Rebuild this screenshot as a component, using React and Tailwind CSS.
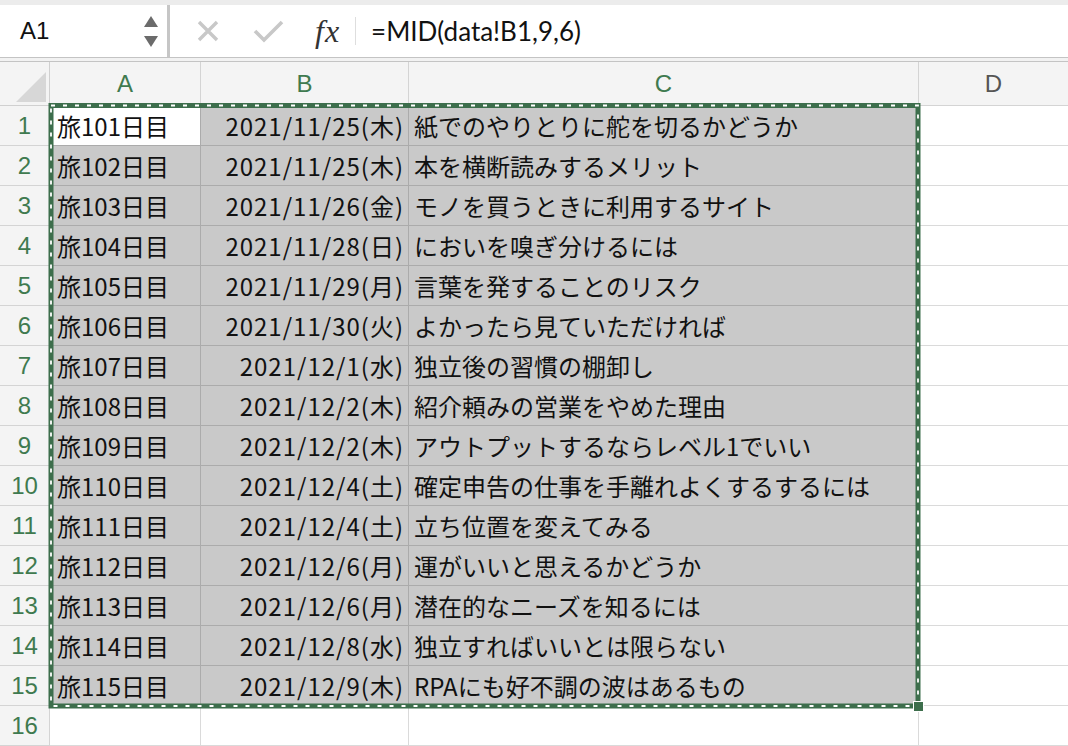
import React from 'react';

const rows = [
    ['旅101日目', '2021/11/25(木)', '紙でのやりとりに舵を切るかどうか'],
    ['旅102日目', '2021/11/25(木)', '本を横断読みするメリット'],
    ['旅103日目', '2021/11/26(金)', 'モノを買うときに利用するサイト'],
    ['旅104日目', '2021/11/28(日)', 'においを嗅ぎ分けるには'],
    ['旅105日目', '2021/11/29(月)', '言葉を発することのリスク'],
    ['旅106日目', '2021/11/30(火)', 'よかったら見ていただければ'],
    ['旅107日目', '2021/12/1(水)', '独立後の習慣の棚卸し'],
    ['旅108日目', '2021/12/2(木)', '紹介頼みの営業をやめた理由'],
    ['旅109日目', '2021/12/2(木)', 'アウトプットするならレベル1でいい'],
    ['旅110日目', '2021/12/4(土)', '確定申告の仕事を手離れよくするするには'],
    ['旅111日目', '2021/12/4(土)', '立ち位置を変えてみる'],
    ['旅112日目', '2021/12/6(月)', '運がいいと思えるかどうか'],
    ['旅113日目', '2021/12/6(月)', '潜在的なニーズを知るには'],
    ['旅114日目', '2021/12/8(水)', '独立すればいいとは限らない'],
    ['旅115日目', '2021/12/9(木)', 'RPAにも好不調の波はあるもの'],
];

const cellFont = { fontFamily: '"Noto Sans CJK JP", "Noto Sans", sans-serif' };

const RowHead = ({ n }) => (
    <div className="w-[50px] shrink-0 bg-[#f4f4f4] border-r border-b border-[#d4d4d4] flex items-center justify-center text-[24px] text-[#3f7a4f] font-['Liberation_Sans',sans-serif]">
        {n}
    </div>
);

export default function App() {
    return (
        <div className="w-[1068px] h-[746px] overflow-hidden bg-white select-none">
            {/* Formula bar */}
            <div className="bg-[#ececec] pt-[5px]">
                <div className="flex h-[52px] bg-white">
                    <div className="w-[170px] shrink-0 flex items-center border-r-[3px] border-[#c6c6c6]">
                        <span className="pl-[20px] flex-1 text-[24px] text-[#111] font-['Liberation_Sans',sans-serif]">A1</span>
                        <div className="w-[30px] flex flex-col items-center gap-[9px] pr-[2px]">
                            <svg width="14" height="11" viewBox="0 0 14 11"><path d="M7 0 L14 11 L0 11 Z" fill="#6b6b6b" /></svg>
                            <svg width="14" height="11" viewBox="0 0 14 11"><path d="M0 0 L14 0 L7 11 Z" fill="#6b6b6b" /></svg>
                        </div>
                    </div>
                    <div className="flex-1 flex items-center">
                        <svg className="ml-[27px]" width="22" height="22" viewBox="0 0 22 22">
                            <path d="M2 2 L20 20 M20 2 L2 20" stroke="#c8c8c8" strokeWidth="3.4" />
                        </svg>
                        <svg className="ml-[34px]" width="31" height="25" viewBox="0 0 31 25">
                            <path d="M2 12 L11 21 L29 3" stroke="#c8c8c8" strokeWidth="3.6" fill="none" />
                        </svg>
                        <span className="ml-[31px] text-[32px] leading-none italic text-[#333] font-['Liberation_Serif',serif] tracking-[1px]">fx</span>
                        <div className="ml-[15px] w-[1px] h-[28px] bg-[#dedede]" />
                        <span className="ml-[15px] text-[26px] text-[#111] font-['Lato',sans-serif]">=MID(data!B1,9,6)</span>
                    </div>
                </div>
                <div className="h-[1px] bg-[#c4c4c4]" />
                <div className="h-[3px] bg-[#f2f2f2]" />
                <div className="h-[1px] bg-[#c4c4c4]" />
            </div>

            {/* Column header */}
            <div className="flex h-[44px] bg-[#f4f4f4] text-[24px] text-[#3f7a4f] font-['Liberation_Sans',sans-serif]">
                <div className="w-[50px] shrink-0 border-r border-b border-[#d0d0d0] relative">
                    <svg className="absolute right-[3px] bottom-[3px]" width="30" height="30" viewBox="0 0 30 30">
                        <path d="M30 0 L30 30 L0 30 Z" fill="#d7d7d7" />
                    </svg>
                </div>
                <div className="w-[151px] shrink-0 border-r border-b border-[#d4d4d4] flex items-center justify-center">A</div>
                <div className="w-[208px] shrink-0 border-r border-b border-[#d4d4d4] flex items-center justify-center">B</div>
                <div className="w-[510px] shrink-0 border-r border-b border-[#d4d4d4] flex items-center justify-center">C</div>
                <div className="flex-1 border-b border-[#d4d4d4] flex items-center justify-center text-[#555]">D</div>
            </div>

            {/* Body */}
            <div className="relative">
                {rows.map((r, i) => (
                    <div key={i} className="flex h-[40px]">
                        <RowHead n={i + 1} />
                        <div
                            style={cellFont}
                            className={`w-[151px] shrink-0 border-r border-b border-[#ababab] flex items-center pl-[7px] text-[24px] text-[#111] ${i === 0 ? 'bg-white' : 'bg-[#c9c9c9]'}`}
                        >
                            {r[0]}
                        </div>
                        <div style={cellFont} className="w-[208px] shrink-0 border-r border-b border-[#ababab] bg-[#c9c9c9] flex items-center justify-end pr-[4px] text-[24px] tracking-[1px] text-[#111]">
                            {r[1]}
                        </div>
                        <div style={cellFont} className="w-[510px] shrink-0 border-r border-b border-[#ababab] bg-[#c9c9c9] flex items-center pl-[5px] text-[24px] text-[#111] whitespace-nowrap">
                            {r[2]}
                        </div>
                        <div className="flex-1 border-b border-[#dadada]" />
                    </div>
                ))}
                <div className="flex h-[40px]">
                    <RowHead n={16} />
                    <div className="w-[151px] shrink-0 border-r border-b border-[#dadada]" />
                    <div className="w-[208px] shrink-0 border-r border-b border-[#dadada]" />
                    <div className="w-[510px] shrink-0 border-r border-b border-[#dadada]" />
                    <div className="flex-1 border-b border-[#dadada]" />
                </div>

                {/* Copy selection marquee */}
                <svg className="absolute left-0 top-0 pointer-events-none overflow-visible" width="1068" height="640">
                    <rect x="51" y="-0.5" width="867" height="600.5" fill="none" stroke="#3d6e4c" strokeWidth="5" />
                    <rect x="51" y="-0.5" width="867" height="600.5" fill="none" stroke="#ffffff" strokeWidth="1.8" strokeDasharray="4 8" />
                    <rect x="913.5" y="595.5" width="10" height="10" fill="#3d6e4c" stroke="#ffffff" strokeWidth="1" />
                </svg>
            </div>
        </div>
    );
}
